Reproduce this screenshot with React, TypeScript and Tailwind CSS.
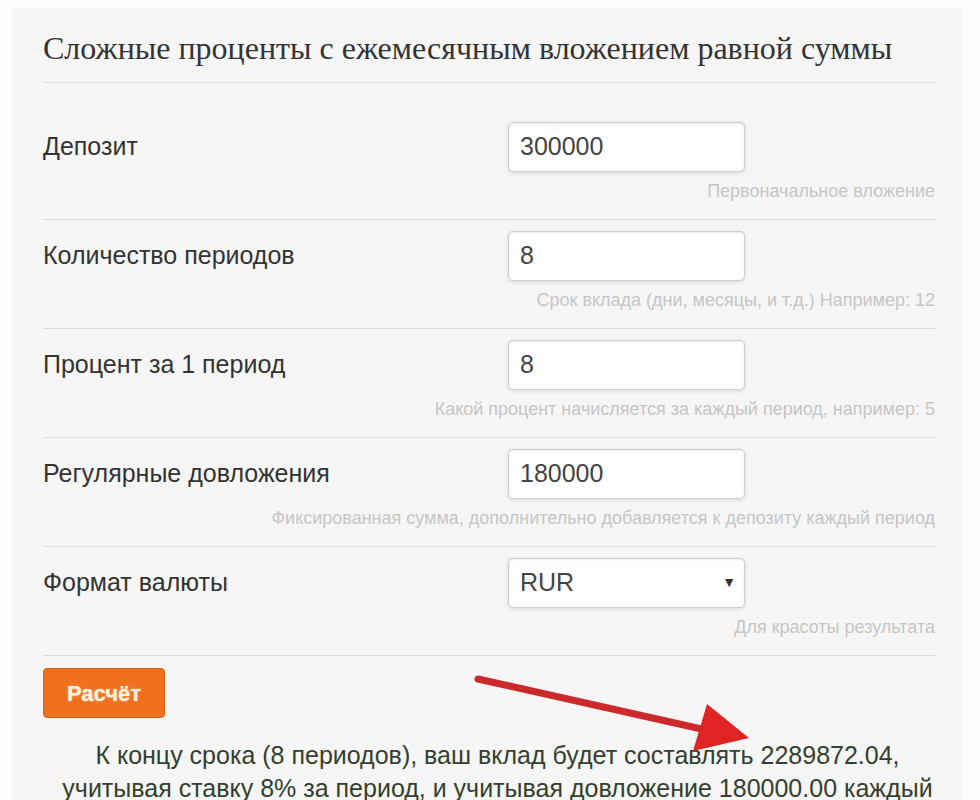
type Row = { label: string; value: string; hint: string; select?: boolean };

const rows: Row[] = [
  { label: "Депозит", value: "300000", hint: "Первоначальное вложение" },
  { label: "Количество периодов", value: "8", hint: "Срок вклада (дни, месяцы, и т.д.) Например: 12" },
  { label: "Процент за 1 период", value: "8", hint: "Какой процент начисляется за каждый период, например: 5" },
  { label: "Регулярные довложения", value: "180000", hint: "Фиксированная сумма, дополнительно добавляется к депозиту каждый период" },
  { label: "Формат валюты", value: "RUR", hint: "Для красоты результата", select: true },
];

function FieldRow({ row }: { row: Row }) {
  return (
    <div className="border-b border-[#dcdcdc] pt-[11px] pb-[18px]">
      <div className="flex items-center h-[50px]">
        <div className="w-[465px] text-[25px] text-[#333]">{row.label}</div>
        <div className="relative w-[237px] h-[50px] rounded-[5px] border border-[#cfcfcf] bg-white shadow-[inset_0_1px_2px_rgba(0,0,0,0.08),0_1px_4px_rgba(0,0,0,0.12)] flex items-center px-[11px] text-[25px] text-[#444]">
          {row.value}
          {row.select && (
            <span className="absolute right-[8px] top-[13px] text-[14px] text-[#333]">▼</span>
          )}
        </div>
      </div>
      <div className="mt-[9px] text-right text-[18px] leading-[20px] text-[#c6c6c6]">
        {row.hint}
      </div>
    </div>
  );
}

export default function App() {
  return (
    <div className="w-[980px] h-[800px] overflow-hidden bg-[#fdfdfd] pl-[12px] pt-[8px] font-['Liberation_Sans',Arial,sans-serif]">
      <div className="relative w-[950px] h-[800px] bg-[#f6f6f6] pl-[31px] pr-[27px]">
        <div className="border-b border-[#dcdcdc] pt-[22px] pb-[16px]">
          <h1 className="font-['Liberation_Serif','Times_New_Roman',serif] text-[32px] leading-[36px] text-[#333] whitespace-nowrap">
            Сложные проценты с ежемесячным вложением равной суммы
          </h1>
        </div>
        <div className="pt-[28px]">
          {rows.map((r) => (
            <FieldRow key={r.label} row={r} />
          ))}
        </div>
        <div className="pt-[12px]">
          <button className="w-[122px] h-[50px] rounded-[4px] bg-[#f0701f] border border-[#d85e12] text-[22px] font-bold text-[#fff4e4] [text-shadow:0_0_2px_rgba(255,230,180,0.8)]">
            Расчёт
          </button>
        </div>
        <div className="mt-[21px] pl-[17px] text-center text-[25px] leading-[33px] text-[#34402f] whitespace-nowrap">
          К концу срока (8 периодов), ваш вклад будет составлять 2289872.04,
          <br />
          учитывая ставку 8% за период, и учитывая довложение 180000.00 каждый
        </div>
        <svg className="absolute left-[-12px] top-[-8px] pointer-events-none" width="980" height="800">
          <line x1="478" y1="679" x2="715" y2="732" stroke="#cc2a2a" strokeWidth="7" strokeLinecap="round" />
          <polygon points="707,704 749,738 693,751" fill="#e02424" />
        </svg>
      </div>
    </div>
  );
}
